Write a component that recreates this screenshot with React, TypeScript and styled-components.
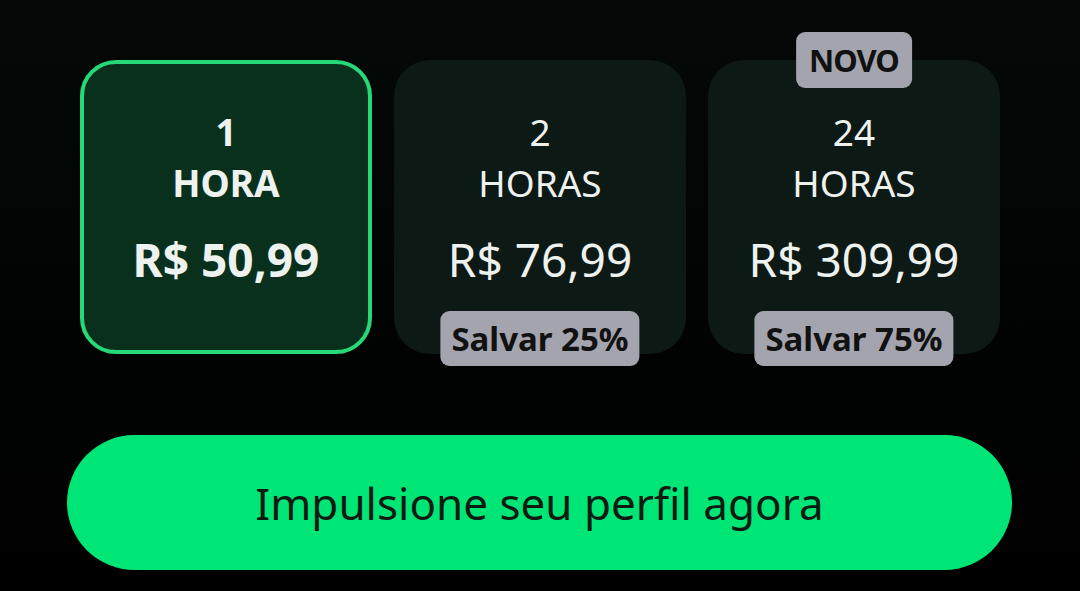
import React from "react";
import styled, { createGlobalStyle } from "styled-components";

type PlanType = {
  id: number;
  count: string;
  unit: string;
  price: string;
  selected?: boolean;
  badge?: string;
  saving?: string;
};

const plans: Array<PlanType> = [
  { id: 1, count: "1", unit: "HORA", price: "R$ 50,99", selected: true },
  { id: 2, count: "2", unit: "HORAS", price: "R$ 76,99", saving: "Salvar 25%" },
  {
    id: 3,
    count: "24",
    unit: "HORAS",
    price: "R$ 309,99",
    badge: "NOVO",
    saving: "Salvar 75%",
  },
];

const App: React.FC = () => {
  return (
    <>
      <GlobalStyle />
      <Page>
        <PlanRow>
          {plans.map((plan) => (
            <PlanCard key={plan.id} $selected={!!plan.selected}>
              {plan.badge && <TopBadge>{plan.badge}</TopBadge>}
              <Count $selected={!!plan.selected}>{plan.count}</Count>
              <Unit $selected={!!plan.selected}>{plan.unit}</Unit>
              <Price $selected={!!plan.selected}>{plan.price}</Price>
              {plan.saving && <SavingBadge>{plan.saving}</SavingBadge>}
            </PlanCard>
          ))}
        </PlanRow>
        <BoostButton>Impulsione seu perfil agora</BoostButton>
      </Page>
    </>
  );
};

const GlobalStyle = createGlobalStyle`
  body {
    margin: 0;
    background: #000;
    font-family: "Noto Sans", "Open Sans", sans-serif;
  }
`;

const Page = styled.div`
  width: 1080px;
  height: 591px;
  box-sizing: border-box;
  padding-top: 60px;
  background: linear-gradient(180deg, #040907 0%, #010302 60%, #000 100%);
  display: flex;
  flex-direction: column;
`;

const PlanRow = styled.div`
  display: flex;
  gap: 22px;
  padding-left: 80px;
`;

const PlanCard = styled.div<{ $selected: boolean }>`
  position: relative;
  width: 292px;
  height: 294px;
  box-sizing: border-box;
  border-radius: 36px;
  border: 4px solid ${(p) => (p.$selected ? "#26d878" : "transparent")};
  background: ${(p) => (p.$selected ? "#08301d" : "#0d1915")};
  display: flex;
  flex-direction: column;
  align-items: center;
  padding-top: 42px;
  color: #eef2ef;
`;

const Count = styled.div<{ $selected: boolean }>`
  font-size: 37px;
  line-height: 51px;
  font-weight: ${(p) => (p.$selected ? 700 : 400)};
`;

const Unit = styled.div<{ $selected: boolean }>`
  font-size: 37px;
  line-height: 51px;
  font-weight: ${(p) => (p.$selected ? 700 : 400)};
`;

const Price = styled.div<{ $selected: boolean }>`
  margin-top: 22px;
  font-size: 46px;
  line-height: 58px;
  font-weight: ${(p) => (p.$selected ? 700 : 400)};
`;

const TopBadge = styled.div`
  position: absolute;
  top: -32px;
  left: 50%;
  transform: translateX(-50%);
  padding: 0 13px;
  height: 56px;
  display: flex;
  align-items: center;
  border-radius: 9px;
  background: #a4a4ae;
  color: #111;
  font-size: 31px;
  font-weight: 700;
  letter-spacing: -1px;
`;

const SavingBadge = styled.div`
  position: absolute;
  bottom: -16px;
  left: 50%;
  transform: translateX(-50%);
  padding: 0 11px;
  height: 55px;
  display: flex;
  align-items: center;
  border-radius: 9px;
  background: #a4a4ae;
  color: #111;
  font-size: 33px;
  font-weight: 700;
  white-space: nowrap;
`;

const BoostButton = styled.button`
  margin: 81px 0 0 67px;
  width: 945px;
  height: 135px;
  border: none;
  border-radius: 68px;
  background: #00e676;
  color: #0d1a12;
  font-family: inherit;
  font-size: 44px;
  font-weight: 400;
`;

export default App;
